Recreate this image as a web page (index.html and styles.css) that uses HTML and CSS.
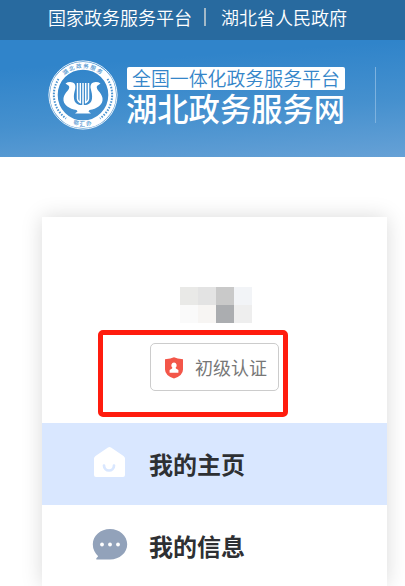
FILE: index.html
```
<!DOCTYPE html>
<html lang="zh-CN">
<head>
<meta charset="utf-8">
<title>湖北政务服务网</title>
<link rel="stylesheet" href="styles.css">
</head>
<body>
<nav class="topbar"><span>国家政务服务平台</span><i class="sep"></i><span>湖北省人民政府</span></nav>
<header class="header">
  <svg class="seal" viewBox="0 0 70 70">
    <defs>
      <path id="arc-top" d="M8 35a27 27 0 0 1 54 0"/>
      <path id="arc-bottom" d="M4.200 35a30.800 30.800 0 0 0 61.600 0"/>
    </defs>
    <circle cx="35" cy="35" r="34.1" fill="none" stroke="#fff" stroke-width=".9"/>
    <circle cx="35" cy="35" r="29.2" fill="none" stroke="#fff" stroke-width="7.800"/>
    <g fill="none" stroke="#4a93d0" stroke-width="2" stroke-dasharray="1.500 1.400">
      <path d="M10.500 19A29.200 29.200 0 0 0 18 58.500"/>
      <path d="M59.500 19A29.200 29.200 0 0 1 52 58.500"/>
    </g>
    <g class="seal-text">
      <text><textPath href="#arc-top" startOffset="50%" text-anchor="middle">湖北政务服务</textPath></text>
      <text><textPath href="#arc-bottom" startOffset="50%" text-anchor="middle">鄂汇办</textPath></text>
    </g>
    <path fill="#fff" d="M17.500 23.500Q20 21.800 23.500 22.200C27 22.500 28 25.500 27.200 29C26.500 32 25.500 35 26 38.500C26.500 42.500 29 44.500 32 45H38C41 44.500 43.500 42.500 44 38.500C44.500 35 43.500 32 42.800 29C42 25.500 43 22.500 46.500 22.200Q50 21.800 52.500 23.500L49 26C47.500 30 53.500 32 54.500 38C55.500 45 48.500 49 41.500 50L40.500 51.500L43 53.500H27L29.500 51.500L28.500 50C21.500 49 14.500 45 15.500 38C16.500 32 22.500 30 21 26Z"/>
    <path fill="none" stroke="#fff" stroke-width="1.500" d="M29.500 23V39Q30 42 33 43M32.300 23V43M35 23V46M37.700 23V43M40.500 23V39Q40 42 37 43"/>
  </svg>
  <div class="brand">
    <div class="platform">全国一体化政务服务平台</div>
    <div class="site">湖北政务服务网</div>
  </div>
  <i class="rule"></i>
</header>
<main class="card">
  <div class="name"><i></i><i></i><i></i><i></i><i></i><i></i><i></i><i></i></div>
  <div class="highlight">
    <div class="badge">
      <svg class="shield" viewBox="0 0 18 22"><path fill="#f35649" d="M9 .3Q12 1.800 18 2.200V12.500Q18 18.500 9 21.600Q0 18.500 0 12.500V2.200Q6 1.800 9 .3Z"/><path fill="#fff" d="M9 5.600a2.700 2.700 0 0 1 1.700 4.800l.2 1.200 2.500 1.400v2.700H4.600V13l2.500-1.400.2-1.200A2.700 2.700 0 0 1 9 5.600Z"/></svg>
      <span>初级认证</span>
    </div>
  </div>
  <div class="item active">
    <svg class="icon" viewBox="0 0 36 32"><path fill="#fff" d="M16 1.500Q17.500.3 19 1.500L31.500 10Q33 11 33 12.500V29Q33 31 31 31H4Q2 31 2 29V12.500Q2 11 3.500 10Z"/><path d="M12 19.500a5 5 0 0 0 10 0" fill="none" stroke="#d9e7ff" stroke-width="2.700" stroke-linecap="round"/></svg>
    <span>我的主页</span>
  </div>
  <div class="item">
    <svg class="icon" viewBox="0 0 36 32"><path fill="#92a2ba" d="M18 1C27.500 1 35.200 7.600 35.200 16.300C35.200 25 27.500 31.500 18 31.500H5Q3.500 31.500 4.400 30.300L6.200 28.300Q.8 23 .8 16.300C.8 7.600 8.500 1 18 1Z"/><g fill="#fff"><circle cx="10" cy="16.500" r="1.900"/><circle cx="18" cy="16.500" r="1.900"/><circle cx="26" cy="16.500" r="1.900"/></g></svg>
    <span>我的信息</span>
  </div>
</main>
</body>
</html>
```
FILE: styles.css
```
* { box-sizing: border-box; }
body {
  margin: 0;
  height: 586px;
  overflow: hidden;
  background: #fff;
  font-family: "Noto Sans CJK SC", sans-serif;
}
i { display: block; }
span, .platform, .site { white-space: nowrap; }
.topbar {
  display: flex;
  height: 40px;
  padding: 0 0 6px 48px;
  align-items: center;
  background: #286a9f;
  color: #fff;
  font-size: 18px;
  line-height: 26px;
  font-weight: 350;
}
.sep {
  width: 2px;
  height: 18px;
  margin: 0 15px 0 12px;
  background: #a3b9c8;
}
.header {
  display: flex;
  height: 117px;
  padding: 20px 0 0 48px;
  background: linear-gradient(176deg, #3084ca 20%, #4590ce 60%, #66a1d6);
}
.seal { width: 70px; height: 70px; flex: none; }
.seal-text { fill: #4a93d0; font-size: 5.5px; font-weight: 500; letter-spacing: 1.3px; }
.brand { width: 218px; margin: 7px 0 0 9px; color: #fff; flex: none; }
.platform {
  height: 23px;
  padding-left: 5px;
  border-radius: 2px;
  background: #fff;
  color: #3586c9;
  font-size: 18.9px;
  font-weight: 350;
  line-height: 22px;
}
.site { font-size: 31.3px; line-height: 36px; font-weight: 500; margin-left: -1px; }
.rule { width: 1px; height: 56px; margin: 7px 0 0 30px; background: #7db2df; }
.card {
  width: 345px;
  height: 369px;
  margin: 60px 0 0 42px;
  padding-top: 70px;
  background: #fff;
  box-shadow: 0 0 20px rgba(0, 0, 0, .15);
  clip-path: inset(-30px -30px 0 -30px);
}
.name {
  display: grid;
  grid-template-columns: repeat(4, 18px);
  grid-auto-rows: 18px;
  margin-left: 138px;
}
.name i:nth-child(1) { background: #e9e9e7; }
.name i:nth-child(2) { background: #e3e3e3; }
.name i:nth-child(3) { background: #c9c9c9; }
.name i:nth-child(4) { background: #f2f4f7; }
.name i:nth-child(5) { background: #fafafa; }
.name i:nth-child(6) { background: #f7f5f3; }
.name i:nth-child(7) { background: #abadb0; }
.name i:nth-child(8) { background: #eee; }
.highlight {
  width: 190px;
  height: 87px;
  margin: 7px 0 6px 56px;
  padding: 8px 0 0 47px;
  border: 5px solid #ff1c0e;
  border-radius: 5px;
}
.badge {
  display: flex;
  align-items: center;
  width: 129px;
  height: 48px;
  padding-left: 14px;
  border: 1px solid #ccc;
  border-radius: 5px;
  color: #777;
  font-size: 18px;
}
.badge span { line-height: 26px; }
.shield { width: 18px; height: 22px; margin: 1px 12px 0 0; }
.item {
  display: flex;
  align-items: center;
  height: 82px;
  padding-left: 50px;
  color: #2e3033;
  font-size: 24px;
  line-height: 36px;
  font-weight: 700;
}
.item:last-child { height: 81px; padding-top: 1px; }
.active { background: #d9e7ff; }
.icon { width: 36px; height: 32px; margin: -4px 21px 0 0; }
```
